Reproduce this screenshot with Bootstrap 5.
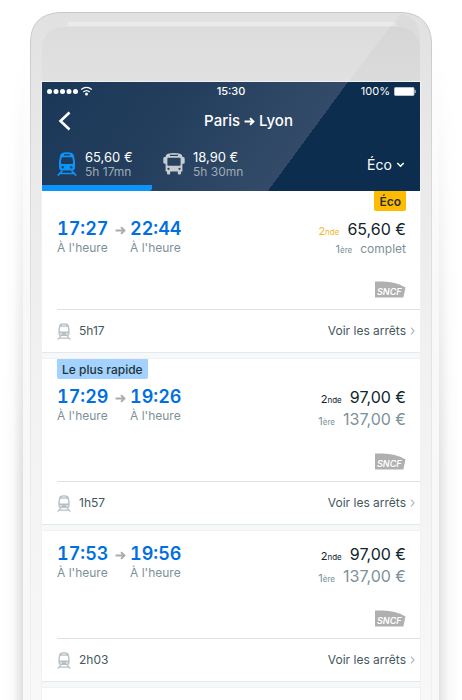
<!DOCTYPE html>
<html lang="fr">
<head>
<meta charset="utf-8">
<meta name="viewport" content="width=device-width, initial-scale=1">
<title>Paris – Lyon</title>
<link href="https://cdn.jsdelivr.net/npm/bootstrap@5.3.0/dist/css/bootstrap.min.css" rel="stylesheet">
<style>
  body { font-family: Inter, "Liberation Sans", sans-serif; background: #fff; color: #1f3238; }
  .phone { padding: 82px 42px 0; }
  .phone-frame { z-index: 0; }
  .screen { z-index: 1; background: #f6f8f9; }
  .topbar { background: linear-gradient(126.3deg, #1b3757 0%, #243f5e 35%, #334b69 66.8%, #0c2d4d 66.8%, #0c2d4d 100%); }
  .status { height: 19px; padding: 0 4px; font-size: 11px; line-height: 19px; }
  .status-side { flex: 1 1 0; }
  .titlebar { height: 40px; padding-left: 15px; }
  .titlebar a { width: 20px; }
  .titlebar h1 { font-size: 15px; line-height: 20px; font-weight: 500; }
  .modes { height: 50px; padding: 6px 15px 0 0; }
  .mode { border: 0; background: none; color: #fff; height: 44px; padding: 0 0 10px 15px; font-size: 13px; line-height: 14px; text-align: left; }
  .mode-train { width: 110px; border-bottom: 6px solid #0b95fb; border-bottom-right-radius: 3px; padding-bottom: 4px; }
  .mode-bus { padding-left: 11px; }
  .mode .length { color: #9fabb5; font-size: 12px; }
  .fare-pick { appearance: none; border: 0; background: none; color: #fff; font-size: 14px; line-height: 20px; padding: 0; }
  .fare-pick option { color: #1f3238; }
  .trip { background: #fff; padding-left: 15px; }
  .trip + .trip { margin-top: 6px; box-shadow: 0 -1px 0 #eef2f3; }
  .trip-edge { border-bottom: 1px solid #e3eaec; }
  .tagline { height: 27px; padding-right: 14px; }
  .tag { height: 20px; line-height: 21px; font-size: 12px; font-weight: 500; padding: 0 5px; border-radius: 0 0 2px 2px; background: #a3d2ff; }
  .tag-eco { background: #ffbb00; font-weight: 600; }
  .trip-body { padding: 0 14px 10px 0; }
  .untagged { padding-top: 12px; }
  .hour { font-size: 18px; line-height: 22px; font-weight: 600; font-variant-numeric: tabular-nums; color: #0070e0; }
  .stop { width: 50px; }
  .state { font-size: 12px; line-height: 16px; color: #7c9297; }
  .price { height: 22px; font-size: 16px; line-height: 22px; color: #10252c; }
  .price-first { color: #7c9297; }
  .price-full { height: 18px; font-size: 12px; line-height: 18px; }
  .grade { font-size: 11px; line-height: 1; }
  .grade small { font-size: 8px; line-height: 1; }
  .grade-eco { color: #f5b62b; }
  .carrier { margin-top: 23px; }
  .trip-foot { height: 43px; border-top: 1px solid #d9e3e6; font-size: 12px; line-height: 16px; padding-right: 5px; color: #43585e; }
  .trip-foot a { color: #43585e; }
</style>
<script src="https://cdn.jsdelivr.net/npm/bootstrap@5.3.0/dist/js/bootstrap.bundle.min.js"></script>
</head>
<body>
<svg class="d-none" aria-hidden="true">
  <symbol id="train" viewBox="0 0 20 24">
    <path fill="currentColor" fill-rule="evenodd" d="M7 .6Q10 0 13 .6C16 1 16.8 2.5 17.2 5L18 9.5V15Q18 18.6 14.8 18.6H5.200Q2 18.600 2 15V9.500L2.800 5C3.200 2.500 4 1 7 .6ZM7 2.300V3.500H13V2.300ZM5.600 5.300Q4.700 5.300 4.500 6.200L3.800 10.500Q3.800 11.900 5 11.900H15Q16.200 11.900 16.200 10.500L15.500 6.200Q15.300 5.300 14.400 5.300ZM5.700 14A1.200 1.200 0 1 0 5.700 16.400A1.200 1.200 0 1 0 5.700 14ZM14.300 14A1.200 1.200 0 1 0 14.300 16.400A1.200 1.200 0 1 0 14.300 14Z"/>
    <path fill="none" stroke="currentColor" stroke-width="1.700" d="M5.500 18.500L.8 23.600M14.500 18.500L19.200 23.600M3.500 21.500H16.500"/>
  </symbol>
  <symbol id="bus" viewBox="0 0 22 22">
    <path fill="currentColor" fill-rule="evenodd" d="M5 .7Q11 -.5 17 .7Q19.200 1.200 19.400 3.500V18.500H18V20.500Q18 21.500 17 21.500H15.800Q14.800 21.500 14.800 20.500V18.500H7.200V20.500Q7.200 21.500 6.200 21.500H5Q4 21.500 4 20.500V18.500H2.600V3.500Q2.800 1.200 5 .7ZM7 1.800V3H15V1.800ZM5.200 4.800Q4.400 4.800 4.400 5.600V12Q4.400 12.800 5.200 12.800H16.800Q17.600 12.800 17.600 12V5.600Q17.600 4.800 16.800 4.800ZM5.500 14.700A1.100 1.100 0 1 0 5.500 16.900A1.100 1.100 0 1 0 5.500 14.700ZM16.500 14.700A1.100 1.100 0 1 0 16.500 16.900A1.100 1.100 0 1 0 16.500 14.700Z"/>
    <path fill="currentColor" d="M3 4H1.500Q.3 4 .3 5.500V9.500Q.3 10.800 1.800 10.800H3ZM19 4H20.500Q21.700 4 21.700 5.500V9.500Q21.700 10.800 20.200 10.800H19Z"/>
  </symbol>
  <symbol id="arrow" viewBox="0 0 12 10">
    <path fill="none" stroke="currentColor" stroke-width="2.200" d="M.5 5H10.500M6.600 1.200L10.400 5L6.600 8.800"/>
  </symbol>
  <symbol id="next" viewBox="0 0 5 8">
    <path fill="none" stroke="#aebbbf" stroke-width="1.200" d="M1 .7L4 4L1 7.300"/>
  </symbol>
  <symbol id="sncf" viewBox="0 0 31 18">
    <path fill="#b0b0b0" d="M0 .6H8Q20 .8 30.500 6.400L28.300 16.400H0Z"/>
    <text x="2" y="14" font-family="Inter, sans-serif" font-size="9" font-style="italic" font-weight="600" fill="#fff">SNCF</text>
  </symbol>
</svg>

<div class="phone position-relative min-vh-100 d-flex flex-column overflow-hidden">
  <svg class="phone-frame position-absolute top-0 start-0 w-100 h-100" viewBox="0 0 462 700" preserveAspectRatio="none" aria-hidden="true">
    <defs>
      <linearGradient id="shell" x1="0" y1="0" x2="0" y2="1">
        <stop offset="0" stop-color="#e1e1e1"/><stop offset=".2" stop-color="#e9e9e9"/><stop offset=".5" stop-color="#f1f1f1"/><stop offset="1" stop-color="#f8f8f8"/>
      </linearGradient>
      <linearGradient id="edge" x1="0" y1="0" x2="0" y2="1">
        <stop offset="0" stop-color="#c8c8c8"/><stop offset=".3" stop-color="#dcdcdc"/><stop offset=".7" stop-color="#eaeaea"/><stop offset="1" stop-color="#f0f0f0"/>
      </linearGradient>
      <linearGradient id="rim" gradientUnits="userSpaceOnUse" x1="0" y1="20" x2="0" y2="280">
        <stop offset="0" stop-color="#fff"/><stop offset=".4" stop-color="#fcfcfc"/><stop offset="1" stop-color="#f8f8f8"/>
      </linearGradient>
      <linearGradient id="face" x1="0" y1="0" x2="0" y2="1">
        <stop offset="0" stop-color="#dcdcdc"/><stop offset="1" stop-color="#e1e1e1"/>
      </linearGradient>
      <linearGradient id="shadeLeft"><stop offset="0" stop-color="#fff"/><stop offset=".5" stop-color="#fafafa"/><stop offset="1" stop-color="#e0e0e0"/></linearGradient>
      <linearGradient id="shadeRight"><stop offset="0" stop-color="#e3e3e3"/><stop offset=".5" stop-color="#f9f9f9"/><stop offset="1" stop-color="#fff"/></linearGradient>
      <linearGradient id="fade" gradientUnits="userSpaceOnUse" x1="0" y1="60" x2="0" y2="480"><stop offset="0" stop-color="#000"/><stop offset="1" stop-color="#fff"/></linearGradient>
      <mask id="fadeIn" maskUnits="userSpaceOnUse" x="0" y="0" width="462" height="700"><path fill="url(#fade)" d="M0 0H462V700H0Z"/></mask>
    </defs>
    <path fill="url(#rim)" d="M23 700V60Q23 10 66 8H396Q438 10 439 60V700Z"/>
    <g mask="url(#fadeIn)">
      <path fill="url(#shadeLeft)" d="M3 0H23V700H3Z"/>
      <path fill="url(#shadeRight)" d="M439 0H459V700H439Z"/>
    </g>
    <path fill="url(#shell)" stroke="url(#edge)" d="M30.500 710V42Q31 14 60 12.500H402Q430 14 431.500 42V710"/>
    <path fill="url(#face)" d="M42 82V50Q43 27 64 27H400Q416 28 420 46V82Z"/>
    <path fill="#fff" opacity=".3" d="M68 22H396V26H68Z"/>
    <path fill="#000" opacity=".025" d="M400 14Q422 16 420 46V82H348Z"/>
    <path fill="none" stroke="#f1f1f1" d="M41.500 700V81.500H420.500V700"/>
  </svg>

  <main class="screen position-relative flex-grow-1 d-flex flex-column">
    <header class="topbar text-white">
      <div class="status d-flex align-items-center">
        <div class="status-side d-flex align-items-center">
          <svg width="47" height="11" viewBox="0 0 47 11" role="img" aria-label="Réseau et Wi-Fi">
            <g fill="#fff"><circle cx="3.500" cy="5.500" r="2.500"/><circle cx="10" cy="5.500" r="2.500"/><circle cx="16.500" cy="5.500" r="2.500"/><circle cx="23" cy="5.500" r="2.500"/><circle cx="29.500" cy="5.500" r="2.500"/><circle cx="40.500" cy="8" r="1.500"/></g>
            <path fill="none" stroke="#fff" stroke-width="1.300" d="M35.200 3.600Q40.500 -.8 45.800 3.600M37.300 6Q40.500 3.200 43.700 6"/>
          </svg>
        </div>
        <span class="fw-medium">15:30</span>
        <div class="status-side d-flex align-items-center justify-content-end gap-1">
          <span>100%</span>
          <svg width="22" height="9" viewBox="0 0 22 9" role="img" aria-label="Batterie"><rect x=".5" y=".5" width="19.500" height="8" rx="1" fill="#fff" stroke="#b9c3cd"/><path fill="#fff" d="M20.700 3H21.500V6H20.700Z"/></svg>
        </div>
      </div>
      <div class="titlebar d-flex align-items-center">
        <a href="#" class="d-flex" aria-label="Retour">
          <svg width="14" height="20" viewBox="0 0 14 20" aria-hidden="true"><path fill="none" stroke="#fff" stroke-width="2.600" d="M12.500 1.500L3.500 10L12.500 18.500"/></svg>
        </a>
        <h1 class="m-0 flex-grow-1 d-flex align-items-center justify-content-center">Paris<svg class="mx-1" width="11" height="9" aria-label="vers"><use href="#arrow"/></svg>Lyon</h1>
      </div>
      <div class="modes d-flex align-items-start">
        <button type="button" class="mode mode-train d-flex align-items-center" aria-pressed="true">
          <svg class="flex-shrink-0 me-2" width="20" height="24" color="#0b95fb" aria-hidden="true"><use href="#train"/></svg>
          <span class="text-nowrap">65,60 €<br><span class="length">5h 17mn</span></span>
        </button>
        <button type="button" class="mode mode-bus d-flex align-items-center">
          <svg class="flex-shrink-0 me-2" width="22" height="22" color="#c6cccf" aria-hidden="true"><use href="#bus"/></svg>
          <span class="text-nowrap">18,90 €<br><span class="length">5h 30mn</span></span>
        </button>
        <div class="ms-auto mt-2 d-flex align-items-center gap-1">
          <select class="fare-pick" aria-label="Classe tarifaire"><option>Éco</option></select>
          <svg width="9" height="6" viewBox="0 0 9 6" aria-hidden="true"><path fill="none" stroke="#fff" stroke-width="1.600" d="M1.300 1L4.500 4.200L7.700 1"/></svg>
        </div>
      </div>
    </header>

    <article class="trip trip-edge">
      <div class="tagline d-flex justify-content-end align-items-start"><span class="tag tag-eco">Éco</span></div>
      <div class="trip-body d-flex justify-content-between">
        <div class="d-flex align-items-start">
          <div class="stop"><time class="hour d-block">17:27</time><div class="state text-nowrap">À l'heure</div></div>
          <svg class="mt-2 ms-2 me-1" width="11" height="9" color="#a9adae" aria-hidden="true"><use href="#arrow"/></svg>
          <div class="stop"><time class="hour d-block">22:44</time><div class="state text-nowrap">À l'heure</div></div>
        </div>
        <div class="d-flex flex-column align-items-end">
          <div class="price"><span class="grade grade-eco me-2">2<small>nde</small></span>65,60 €</div>
          <div class="price price-first price-full"><span class="grade me-2">1<small>ère</small></span>complet</div>
          <svg class="carrier" width="31" height="18" role="img" aria-label="SNCF"><use href="#sncf"/></svg>
        </div>
      </div>
      <div class="trip-foot d-flex align-items-center">
        <svg class="me-2" width="14" height="17" color="#b5c1c3" aria-hidden="true"><use href="#train"/></svg>5h17
        <a href="#" class="ms-auto d-flex align-items-center gap-1 text-decoration-none">Voir les arrêts<svg width="5" height="8" aria-hidden="true"><use href="#next"/></svg></a>
      </div>
    </article>

    <article class="trip trip-edge">
      <div class="tagline d-flex align-items-start"><span class="tag">Le plus rapide</span></div>
      <div class="trip-body d-flex justify-content-between">
        <div class="d-flex align-items-start">
          <div class="stop"><time class="hour d-block">17:29</time><div class="state text-nowrap">À l'heure</div></div>
          <svg class="mt-2 ms-2 me-1" width="11" height="9" color="#a9adae" aria-hidden="true"><use href="#arrow"/></svg>
          <div class="stop"><time class="hour d-block">19:26</time><div class="state text-nowrap">À l'heure</div></div>
        </div>
        <div class="d-flex flex-column align-items-end">
          <div class="price"><span class="grade me-2">2<small>nde</small></span>97,00 €</div>
          <div class="price price-first"><span class="grade me-2">1<small>ère</small></span>137,00 €</div>
          <svg class="carrier" width="31" height="18" role="img" aria-label="SNCF"><use href="#sncf"/></svg>
        </div>
      </div>
      <div class="trip-foot d-flex align-items-center">
        <svg class="me-2" width="14" height="17" color="#b5c1c3" aria-hidden="true"><use href="#train"/></svg>1h57
        <a href="#" class="ms-auto d-flex align-items-center gap-1 text-decoration-none">Voir les arrêts<svg width="5" height="8" aria-hidden="true"><use href="#next"/></svg></a>
      </div>
    </article>

    <article class="trip trip-edge untagged">
      <div class="trip-body d-flex justify-content-between">
        <div class="d-flex align-items-start">
          <div class="stop"><time class="hour d-block">17:53</time><div class="state text-nowrap">À l'heure</div></div>
          <svg class="mt-2 ms-2 me-1" width="11" height="9" color="#a9adae" aria-hidden="true"><use href="#arrow"/></svg>
          <div class="stop"><time class="hour d-block">19:56</time><div class="state text-nowrap">À l'heure</div></div>
        </div>
        <div class="d-flex flex-column align-items-end">
          <div class="price"><span class="grade me-2">2<small>nde</small></span>97,00 €</div>
          <div class="price price-first"><span class="grade me-2">1<small>ère</small></span>137,00 €</div>
          <svg class="carrier" width="31" height="18" role="img" aria-label="SNCF"><use href="#sncf"/></svg>
        </div>
      </div>
      <div class="trip-foot d-flex align-items-center">
        <svg class="me-2" width="14" height="17" color="#b5c1c3" aria-hidden="true"><use href="#train"/></svg>2h03
        <a href="#" class="ms-auto d-flex align-items-center gap-1 text-decoration-none">Voir les arrêts<svg width="5" height="8" aria-hidden="true"><use href="#next"/></svg></a>
      </div>
    </article>

    <div class="trip flex-grow-1"></div>
  </main>
</div>
</body>
</html>
